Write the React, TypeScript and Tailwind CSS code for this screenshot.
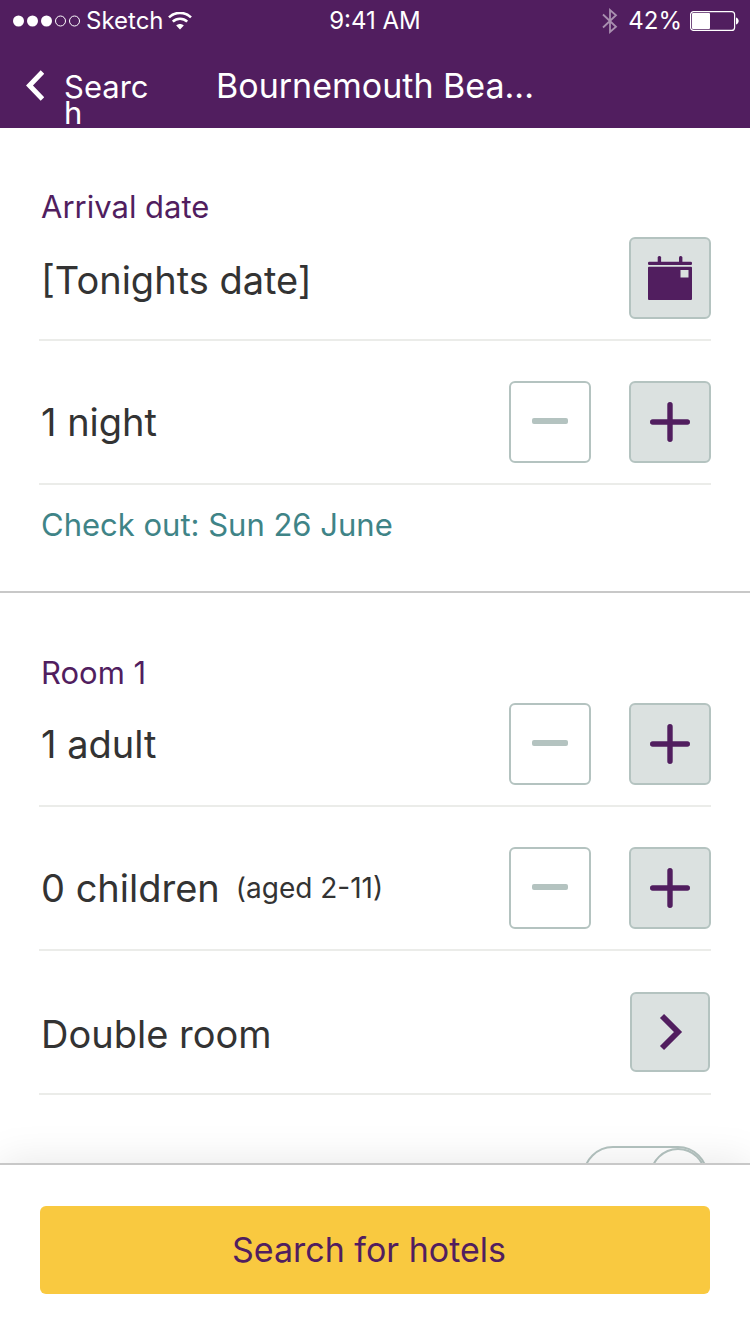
import { useState } from 'react';
import type { ReactNode } from 'react';

interface StepperRowProps {
  label: (value: number) => string;
  note?: string;
  name: string;
  min: number;
  first?: boolean;
}

function StatusBar() {
  return (
    <div className="grid h-10 grid-cols-3 items-center px-3 pt-0.5 text-[24px] leading-7">
      <div className="flex items-center gap-1">
        <svg className="h-3 w-[70px] shrink-0" viewBox="0 0 70 12" fill="none">
          <circle cx="6.5" cy="6" r="5.5" fill="white" />
          <circle cx="20.5" cy="6" r="5.5" fill="white" />
          <circle cx="34.5" cy="6" r="5.5" fill="white" />
          <circle cx="48.5" cy="6" r="5" stroke="white" />
          <circle cx="62.5" cy="6" r="5" stroke="white" />
        </svg>
        <span>Sketch</span>
        <svg className="h-[18px] w-6 shrink-0" viewBox="0 0 24 18" fill="none" stroke="white" strokeWidth="2.6">
          <path d="M1 5.4C7.3-.6 16.7-.6 23 5.4" />
          <path d="M4.8 9.6c4.1-3.9 10.3-3.9 14.4 0" />
          <path d="M8.2 13.4c2.2-2 5.4-2 7.6 0L12 17.4z" fill="white" stroke="none" />
        </svg>
      </div>
      <span className="text-center">9:41 AM</span>
      <div className="flex items-center justify-end gap-2">
        <svg className="mr-0.5 h-[26px] w-4" viewBox="0 0 16 26" fill="none" stroke="white" strokeWidth="1.8" opacity="0.5">
          <path d="M1 6.5L14 18.8L8 24V2l6 5.2L1 19.5" />
        </svg>
        <span>42%</span>
        <svg className="-mr-px h-5 w-[49px]" viewBox="0 0 49 20" fill="none">
          <rect x="0.6" y="0.6" width="44" height="18.8" rx="3" stroke="white" strokeWidth="1.2" />
          <rect x="2" y="2" width="18" height="16" rx="1" fill="white" />
          <path d="M46 6.5c3.6 1.3 3.6 5.7 0 7z" fill="white" />
        </svg>
      </div>
    </div>
  );
}

function Row({ children, first }: { children: ReactNode; first?: boolean }) {
  return (
    <div className={`border-b-2 border-[#ebece9] pb-5 ${first ? 'pt-3' : 'pt-10'}`}>
      <div className="flex h-[82px] items-center gap-8 pl-0.5">{children}</div>
    </div>
  );
}

function StepperRow({ label, note, name, min, first }: StepperRowProps) {
  const [value, setValue] = useState(min);

  return (
    <Row first={first}>
      <div className="flex flex-1 items-center gap-4">
        <span className="text-[38px] leading-12">{label(value)}</span>
        {note && <span className="text-[28px] leading-8">{note}</span>}
      </div>
      <div className="flex gap-[38px]">
        <button
          type="button"
          aria-label={`Fewer ${name}`}
          disabled={value === min}
          onClick={() => setValue(value - 1)}
          className="flex size-[82px] items-center justify-center rounded-md border-2 border-[#b4c3c0] bg-white"
        >
          <svg className="size-10" viewBox="0 0 40 40">
            <rect x="2" y="16" width="36" height="6" rx="2" fill="#b4c3c0" />
          </svg>
        </button>
        <button
          type="button"
          aria-label={`More ${name}`}
          onClick={() => setValue(value + 1)}
          className="flex size-[82px] items-center justify-center rounded-md border-2 border-[#b4c3c0] bg-[#dbe1e0]"
        >
          <svg className="size-10" viewBox="0 0 40 40" stroke="#511e5f" strokeWidth="5.4" strokeLinecap="round">
            <path d="M20 2.7V37.3M2.7 20H37.3" />
          </svg>
        </button>
      </div>
    </Row>
  );
}

export default function App() {
  return (
    <div className="flex h-screen flex-col bg-white font-['Inter',sans-serif] text-[#333333]">
      <header className="shrink-0 bg-[#511e5f] text-white">
        <StatusBar />
        <nav className="grid h-[88px] grid-cols-[1fr_auto_1fr] px-6">
          <a href="#search" className="flex items-start gap-5 pt-[34px] text-[31px] leading-[26px]">
            <svg className="-mt-1 h-8 w-5 shrink-0" viewBox="0 0 20 32" fill="none" stroke="white" strokeWidth="5">
              <path d="M18.5 2L5.5 15.5L18.5 29" />
            </svg>
            <span className="w-[86px] break-all">Search</span>
          </a>
          <h1 className="pt-6 text-[34px] leading-11">Bournemouth Bea...</h1>
        </nav>
      </header>

      <main className="min-h-0 flex-1 overflow-y-auto [scrollbar-width:none]">
        <section className="border-b-2 border-[#c8c8c8] px-[39px] pt-[61px] pb-[26px]">
          <h2 className="pl-0.5 text-[31px] leading-9 text-[#511e5f]">Arrival date</h2>
          <Row first>
            <span className="flex-1 pt-1 text-[38px] leading-12">[Tonights date]</span>
            <button
              type="button"
              aria-label="Choose arrival date"
              className="flex size-[82px] items-center justify-center rounded-md border-2 border-[#b4c3c0] bg-[#dbe1e0]"
            >
              <svg className="size-11" viewBox="0 0 44 44" fill="#511e5f">
                <rect x="9.7" y="0" width="3.4" height="8" rx="1.5" />
                <rect x="31" y="0" width="3.4" height="8" rx="1.5" />
                <rect x="0" y="5.8" width="44" height="3.2" rx="1.2" />
                <path d="M1 10.8h42a1 1 0 0 1 1 1V43a1 1 0 0 1-1 1H1a1 1 0 0 1-1-1V11.800a1 1 0 0 1 1-1zM32.500 14v7.500h8V14z" fillRule="evenodd" />
              </svg>
            </button>
          </Row>
          <StepperRow name="nights" min={1} label={(n) => (n === 1 ? '1 night' : `${n} nights`)} />
          <p className="flex h-20 items-center pl-0.5 text-[31px] leading-9 text-[#3f8487]">Check out: Sun 26 June</p>
        </section>

        <section className="px-[39px] pt-[62px]">
          <h2 className="pl-0.5 text-[31px] leading-9 text-[#511e5f]">Room 1</h2>
          <StepperRow first name="adults" min={1} label={(n) => (n === 1 ? '1 adult' : `${n} adults`)} />
          <StepperRow name="children" min={0} label={(n) => (n === 1 ? '1 child' : `${n} children`)} note="(aged 2-11)" />
          <Row>
            <span className="flex-1 pt-1 text-[38px] leading-12">Double room</span>
            <button
              type="button"
              aria-label="Change room type"
              className="mr-px flex size-20 items-center justify-center rounded-md border-2 border-[#b4c3c0] bg-[#dbe1e0]"
            >
              <svg className="size-10" viewBox="0 0 40 40" fill="none" stroke="#511e5f" strokeWidth="5.8">
                <path d="M12 4L28 20L12 36" />
              </svg>
            </button>
          </Row>
          <Row>
            <input
              type="checkbox"
              role="switch"
              aria-label="Room option"
              defaultChecked
              className="mr-[3px] ml-auto flex h-[60px] w-[125px] appearance-none rounded-full border-2 border-[#b4c3c0] before:size-14 before:rounded-full before:border-2 before:border-[#b4c3c0] before:content-[''] checked:before:ml-auto"
            />
          </Row>
        </section>
      </main>

      <footer className="relative z-10 shrink-0 border-t-2 border-[#c8c8c8] bg-white px-10 pt-[41px] pb-10 shadow-[0_0_40px_rgba(0,0,0,0.1)]">
        <button type="submit" className="h-22 w-full rounded-md bg-[#f9c940] pr-3 text-[34px] leading-11 text-[#511e5f]">
          Search for hotels
        </button>
      </footer>
    </div>
  );
}
